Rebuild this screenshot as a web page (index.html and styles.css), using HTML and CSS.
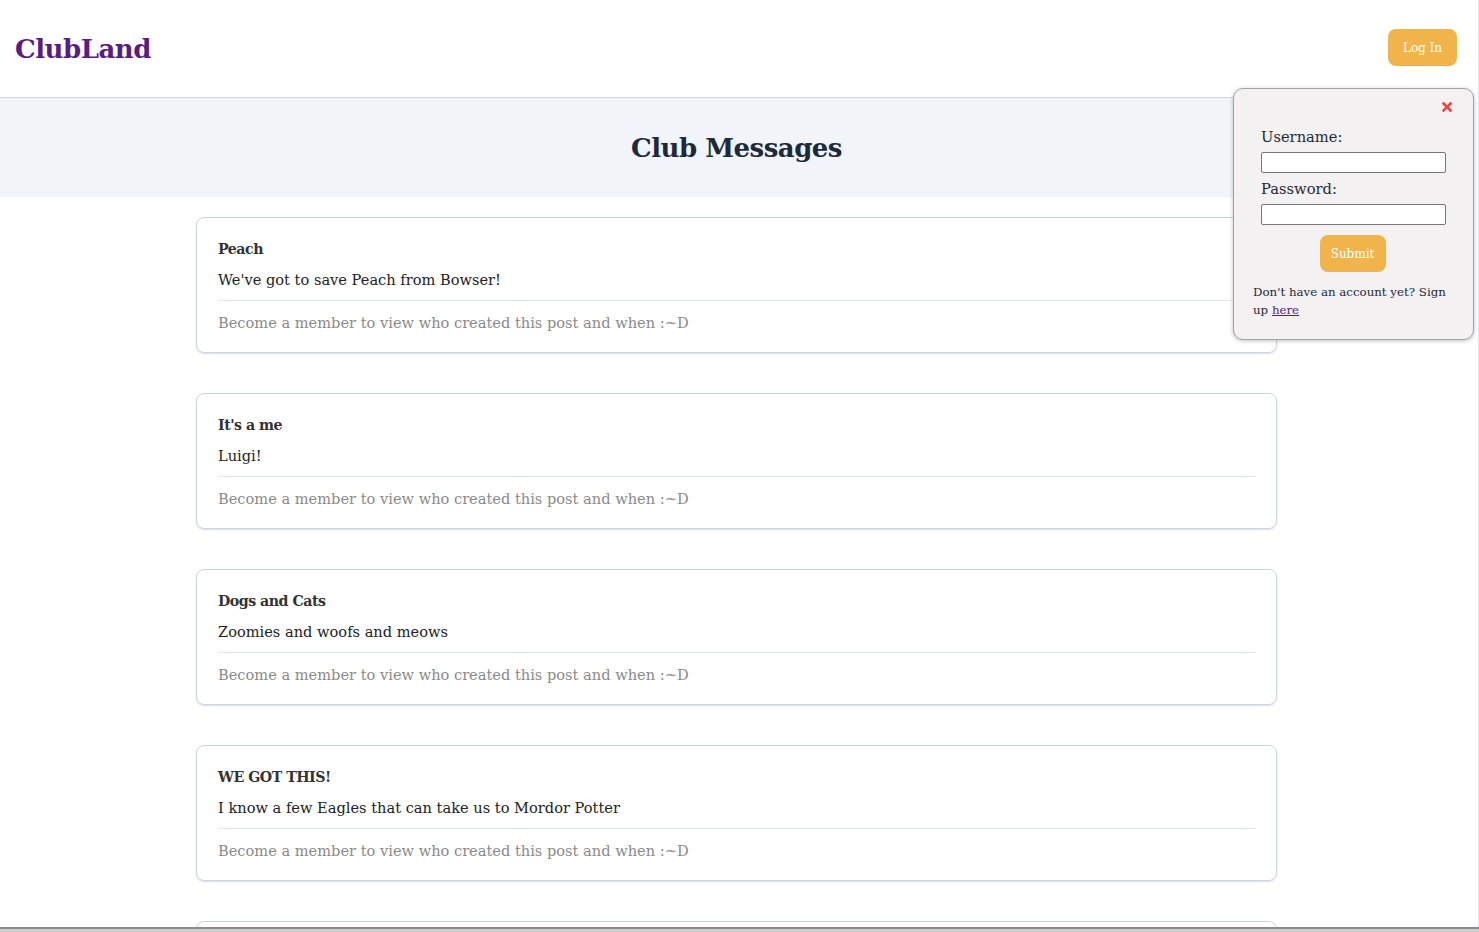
FILE: index.html
```html
<!DOCTYPE html>
<html lang="en">
<head>
<meta charset="utf-8">
<title>ClubLand</title>
<link rel="stylesheet" href="styles.css">
</head>
<body>
<div class="page">
  <header class="site-header">
    <a class="logo" href="#">ClubLand</a>
    <button class="btn login-btn" type="button">Log In</button>
  </header>
  <section class="hero">
    <h1 class="hero-title">Club Messages</h1>
  </section>
  <main class="messages">
    <article class="card">
      <h2 class="card-title">Peach</h2>
      <p class="card-body">We've got to save Peach from Bowser!</p>
      <p class="card-meta">Become a member to view who created this post and when :~D</p>
    </article>
    <article class="card">
      <h2 class="card-title">It's a me</h2>
      <p class="card-body">Luigi!</p>
      <p class="card-meta">Become a member to view who created this post and when :~D</p>
    </article>
    <article class="card">
      <h2 class="card-title">Dogs and Cats</h2>
      <p class="card-body">Zoomies and woofs and meows</p>
      <p class="card-meta">Become a member to view who created this post and when :~D</p>
    </article>
    <article class="card">
      <h2 class="card-title">WE GOT THIS!</h2>
      <p class="card-body">I know a few Eagles that can take us to Mordor Potter</p>
      <p class="card-meta">Become a member to view who created this post and when :~D</p>
    </article>
    <article class="card">
      <h2 class="card-title">Hello</h2>
      <p class="card-body">Hello there</p>
      <p class="card-meta">Become a member to view who created this post and when :~D</p>
    </article>
  </main>
</div>

<div class="login-popup">
  <button class="close-btn" type="button" aria-label="Close">
    <svg width="10" height="10" viewBox="0 0 10 10"><path d="M1.5 1.5 L8.5 8.5 M8.5 1.5 L1.5 8.5" stroke="#ef4444" stroke-width="2.6" stroke-linecap="square"/></svg>
  </button>
  <form class="login-form">
    <label class="field-label" for="username">Username:</label>
    <input class="field-input" id="username" type="text">
    <label class="field-label" for="password">Password:</label>
    <input class="field-input" id="password" type="password">
    <button class="btn submit-btn" type="button">Submit</button>
  </form>
  <p class="signup-text">Don't have an account yet? Sign up <a href="#">here</a></p>
</div>

<div class="bottom-bar"></div>
</body>
</html>
```
FILE: styles.css
```css
* { box-sizing: border-box; }

html, body {
  margin: 0;
  padding: 0;
  background: #ffffff;
  font-family: "DejaVu Serif", "Liberation Serif", serif;
  color: #1f2937;
  overflow: hidden;
}

.page {
  width: 1479px;
  padding-right: 5px;
  border-right: 1px solid #e5e7eb;
  min-height: 932px;
}

.site-header {
  height: 98px;
  border-bottom: 1px solid #d1d5db;
  display: flex;
  align-items: center;
  justify-content: space-between;
  padding: 0 16px 0 15px;
}

.logo {
  font-size: 26px;
  font-weight: 700;
  color: #581c87;
  text-decoration: none;
  letter-spacing: -0.5px;
}

.btn {
  background: #f0b44a;
  color: #ffffff;
  border: none;
  border-radius: 8px;
  font-family: "DejaVu Serif", "Liberation Serif", serif;
  font-size: 12px;
  cursor: pointer;
}

.login-btn {
  width: 69px;
  height: 37px;
  margin-top: -2px;
}

.hero {
  height: 99px;
  background: #f1f5f9;
  display: flex;
  align-items: center;
  justify-content: center;
}

.hero-title {
  margin: 0;
  font-size: 26px;
  font-weight: 700;
  color: #1e293b;
  letter-spacing: -0.5px;
}

.messages {
  width: 1081px;
  margin: 20px auto 0;
  display: flex;
  flex-direction: column;
  gap: 40px;
}

.card {
  border: 1px solid #cbd5e1;
  border-radius: 8px;
  box-shadow: 0 1px 2px rgba(148, 163, 184, 0.35);
  padding: 19px 20px 17px 21px;
}

.card-title {
  margin: 0;
  font-size: 14.2px;
  line-height: 24px;
  font-weight: 700;
  color: #333333;
  letter-spacing: -0.5px;
}

.card-body {
  margin: 7px 0 0;
  font-size: 14.6px;
  line-height: 24px;
  color: #222222;
  padding-bottom: 8px;
  border-bottom: 1px solid #e2e8f0;
}

.card-meta {
  margin: 10px 0 0;
  font-size: 14.6px;
  line-height: 24px;
  color: #8a8a8a;
}

.login-popup {
  position: absolute;
  left: 1233px;
  top: 88px;
  width: 241px;
  height: 252px;
  background: #f3f1f2;
  border: 1px solid #a3a3a3;
  border-radius: 10px;
  box-shadow: 0 1px 4px rgba(0, 0, 0, 0.25);
  padding: 38px 20px 0 19px;
}

.close-btn {
  position: absolute;
  right: 21px;
  top: 13px;
  width: 10px;
  height: 10px;
  padding: 0;
  border: none;
  background: none;
  line-height: 0;
}

.login-form {
  display: flex;
  flex-direction: column;
  padding: 0 8px;
}

.field-label {
  font-size: 14.7px;
  line-height: 20px;
  color: #1f2937;
}

.field-input {
  width: 185px;
  height: 21px;
  border: 1px solid #767676;
  border-radius: 2px;
  background: #ffffff;
  margin: 5px 0 6px;
}

.submit-btn {
  align-self: center;
  width: 66px;
  height: 37px;
  margin: 4px 0 0 -1px;
}

.signup-text {
  margin: 11px 0 0;
  font-size: 11.8px;
  line-height: 18px;
  color: #1f2937;
}

.signup-text a {
  color: #581c87;
}

.bottom-bar {
  position: fixed;
  left: 0;
  right: 0;
  bottom: 0;
  height: 5px;
  background: #cfcfcf;
  border-top: 2px solid #8a8a8a;
}
```
